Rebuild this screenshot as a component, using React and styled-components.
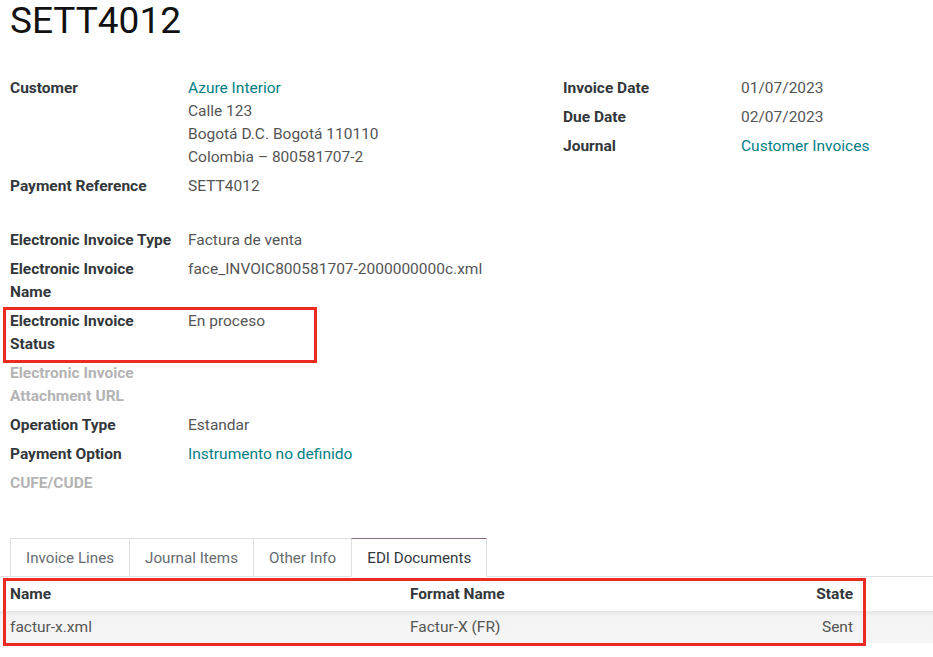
import React from "react";
import styled, { createGlobalStyle } from "styled-components";

const GlobalStyle = createGlobalStyle`
  html, body {
    margin: 0;
    padding: 0;
    background: #ffffff;
  }
  body {
    font-family: Roboto, "Noto Sans", "Liberation Sans", sans-serif;
    color: #212529;
  }
`;

const Page = styled.div`
  width: 933px;
  height: 657px;
  overflow: hidden;
  background: #ffffff;
`;

const Title = styled.h1`
  margin: 0;
  padding-left: 10px;
  font-size: 37px;
  line-height: 42px;
  font-weight: 400;
  color: #111111;
`;

const Form = styled.div`
  display: grid;
  grid-template-columns: 553px 1fr;
  padding-left: 10px;
  margin-top: 35px;
`;

const Column = styled.div`
  display: flex;
  flex-direction: column;
`;

const Row = styled.div`
  position: relative;
  display: flex;
  font-size: 15.5px;
  line-height: 23px;
  margin-bottom: 6px;
  margin-top: ${(p) => p.$gapTop || 0}px;
`;

const Label = styled.div`
  width: 178px;
  flex: none;
  font-weight: 700;
  white-space: pre-line;
  color: ${(p) => (p.$muted ? "#b4b4b4" : "#33373b")};
`;

const Value = styled.div`
  flex: 1;
  color: ${(p) => (p.$link ? "#017e84" : "#555555")};
`;

const Annotation = styled.div`
  position: absolute;
  box-sizing: border-box;
  top: ${(p) => p.$top}px;
  left: ${(p) => p.$left}px;
  width: ${(p) => p.$w}px;
  height: ${(p) => p.$h}px;
  border: 3px solid #ec2a22;
  pointer-events: none;
`;

const Tabs = styled.div`
  display: flex;
  margin-top: 37px;
  padding-left: 10px;
  border-bottom: 1px solid #dcdfe3;
`;

const Tab = styled.div`
  box-sizing: border-box;
  height: 39px;
  padding: 0 15px;
  margin-left: -1px;
  margin-bottom: -1px;
  display: flex;
  align-items: center;
  font-size: 15.2px;
  background: #ffffff;
  border: 1px solid #dcdfe3;
  border-bottom-color: ${(p) => (p.$active ? "#ffffff" : "#dcdfe3")};
  border-top-color: ${(p) => (p.$active ? "#8a6a85" : "#dcdfe3")};
  color: ${(p) => (p.$active ? "#33383d" : "#666b70")};
  &:first-child {
    margin-left: 0;
  }
`;

const TableWrap = styled.div`
  position: relative;
`;

const TableRow = styled.div`
  display: grid;
  grid-template-columns: 400px 1fr 100px 73px;
  align-items: center;
  height: ${(p) => (p.$head ? 34 : 32)}px;
  font-size: 15.5px;
  background: ${(p) =>
    p.$head ? "#ffffff" : "linear-gradient(#e6e6e6, #f3f3f3 5px, #f6f6f6)"};
`;

const Cell = styled.div`
  padding: 0 ${(p) => (p.$right ? 7 : 10)}px 0 10px;
  text-align: ${(p) => (p.$right ? "right" : "left")};
  font-weight: ${(p) => (p.$head ? 700 : 400)};
  color: ${(p) => (p.$head ? "#33373b" : "#555555")};
  white-space: nowrap;
`;

const leftRows = [
  { label: "Customer", lines: [["Azure Interior", true], ["Calle 123"], ["Bogotá D.C. Bogotá 110110"], ["Colombia – 800581707-2"]] },
  { label: "Payment Reference", lines: [["SETT4012"]] },
  { label: "Electronic Invoice Type", lines: [["Factura de venta"]], gapTop: 25 },
  { label: "Electronic Invoice\nName", lines: [["face_INVOIC800581707-2000000000c.xml"]] },
  { label: "Electronic Invoice\nStatus", lines: [["En proceso"]], marked: true },
  { label: "Electronic Invoice\nAttachment URL", lines: [], muted: true },
  { label: "Operation Type", lines: [["Estandar"]] },
  { label: "Payment Option", lines: [["Instrumento no definido", true]] },
  { label: "CUFE/CUDE", lines: [], muted: true },
];

const rightRows = [
  { label: "Invoice Date", lines: [["01/07/2023"]] },
  { label: "Due Date", lines: [["02/07/2023"]] },
  { label: "Journal", lines: [["Customer Invoices", true]] },
];

function Field({ row }) {
  return (
    <Row $gapTop={row.gapTop}>
      <Label $muted={row.muted}>{row.label}</Label>
      <Value>
        {row.lines.map(([text, link], i) => (
          <Value key={i} $link={link}>
            {text}
          </Value>
        ))}
      </Value>
      {row.marked && <Annotation $top={-3} $left={-7} $w={314} $h={56} />}
    </Row>
  );
}

export default function App() {
  return (
    <Page>
      <GlobalStyle />
      <Title>SETT4012</Title>
      <Form>
        <Column>
          {leftRows.map((r) => (
            <Field key={r.label} row={r} />
          ))}
        </Column>
        <Column>
          {rightRows.map((r) => (
            <Field key={r.label} row={r} />
          ))}
        </Column>
      </Form>
      <Tabs>
        <Tab>Invoice Lines</Tab>
        <Tab>Journal Items</Tab>
        <Tab>Other Info</Tab>
        <Tab $active>EDI Documents</Tab>
      </Tabs>
      <TableWrap>
        <TableRow $head>
          <Cell $head>Name</Cell>
          <Cell $head>Format Name</Cell>
          <Cell $head $right>State</Cell>
          <Cell />
        </TableRow>
        <TableRow>
          <Cell>factur-x.xml</Cell>
          <Cell>Factur-X (FR)</Cell>
          <Cell $right>Sent</Cell>
          <Cell />
        </TableRow>
        <Annotation $top={1} $left={3} $w={863} $h={68} />
      </TableWrap>
    </Page>
  );
}
